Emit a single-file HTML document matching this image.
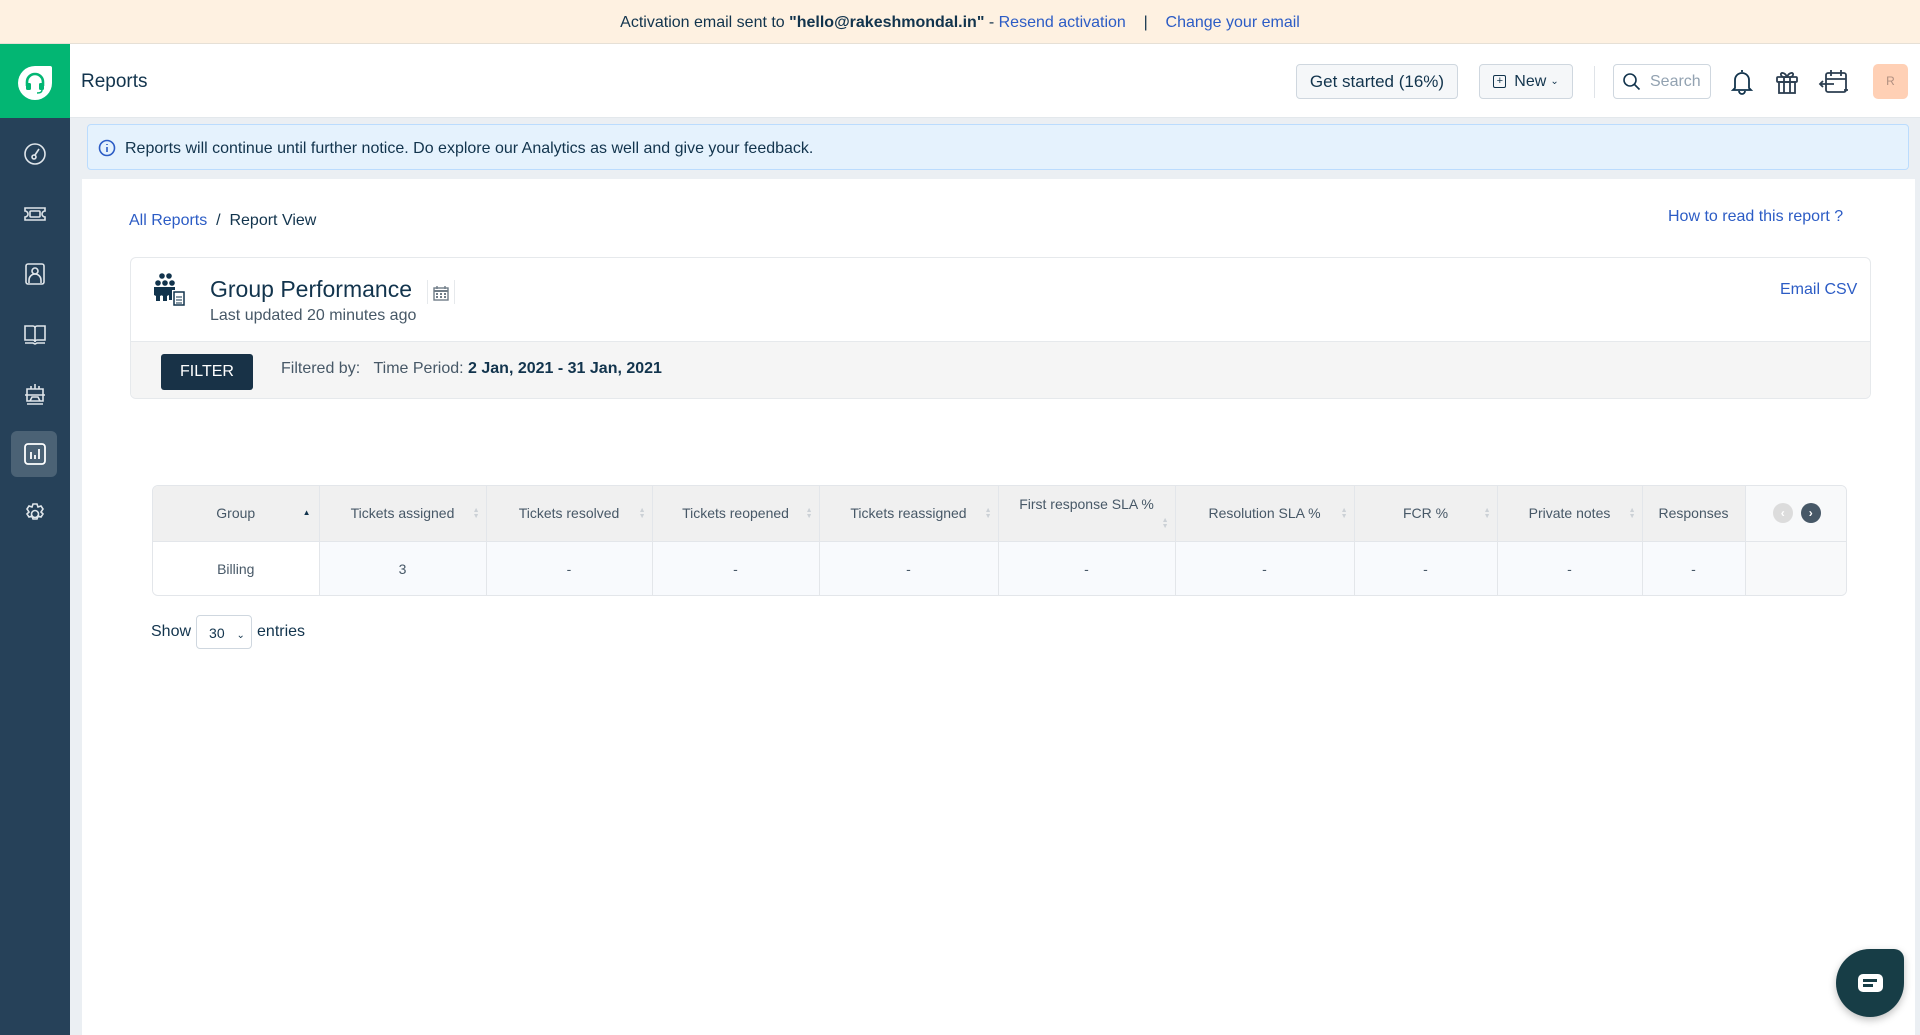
<!DOCTYPE html>
<html><head><meta charset="utf-8">
<style>
*{box-sizing:border-box;margin:0;padding:0}
body{width:1920px;height:1035px;overflow:hidden;font-family:"Liberation Sans",sans-serif;background:#ebeff3;position:relative;color:#12344d}
.abs{position:absolute}
.topb{left:0;top:0;width:1920px;height:44px;background:#fef1e1;border-bottom:1px solid #e6e0d6;font-size:16px;color:#12344d;text-align:center;line-height:46px}
.topb a{color:#2c5cc5;text-decoration:none}
.side{left:0;top:44px;width:70px;height:991px;background:#264159}
.logo{left:0;top:44px;width:70px;height:74px;background:#03b673}
.hdr{left:70px;top:44px;width:1850px;height:74px;background:#fff;border-bottom:1px solid #e3e8ec}
.btn{border:1px solid #cfd7df;border-radius:4px;background:#f5f7f9;font-size:16px;color:#12344d;display:flex;align-items:center;justify-content:center}
.info{left:87px;top:124px;width:1822px;height:46px;background:#e5f2fd;border:1px solid #bbdcfe;border-radius:4px;font-size:16px;line-height:48px;padding-left:37px;color:#12344d}
.card{left:82px;top:179px;width:1833px;height:856px;background:#fff}
.link{color:#2c5cc5}
.rep{left:130px;top:257px;width:1741px;height:142px;border:1px solid #e6e9ec;border-radius:6px;background:#fff;overflow:hidden}
table{border-collapse:collapse;font-size:14px;color:#475867}
td,th{border-right:1px solid #e3e6ea;text-align:center;font-weight:normal}
th{background:#f0f0f0;height:55px;border-bottom:1px solid #e3e6ea}
td{background:#f8fafd;height:55px}
.sort{position:absolute;right:6px;top:22px;font-size:7px;line-height:6px;color:#ccd1d6}
.ico{position:absolute;left:22px;width:26px;height:26px}
</style></head><body>
<div class="abs topb">Activation email sent to <b style="font-weight:bold">"hello@rakeshmondal.in"</b> - <a>Resend activation</a> &nbsp;&nbsp; | &nbsp;&nbsp; <a>Change your email</a></div>
<div class="abs side">
<svg class="ico" style="top:97px" viewBox="0 0 26 26" fill="none" stroke="#dfe5ea" stroke-width="1.6"><circle cx="13" cy="13" r="10"/><path d="M17 8l-4 6"/><circle cx="12" cy="16" r="2"/></svg>
<svg class="ico" style="top:157px" viewBox="0 0 26 26" fill="none" stroke="#dfe5ea" stroke-width="1.6"><path d="M3 7h20v3a3 3 0 000 6v3H3v-3a3 3 0 000-6z"/><rect x="8" y="10" width="10" height="6" rx="1"/></svg>
<svg class="ico" style="top:217px" viewBox="0 0 26 26" fill="none" stroke="#dfe5ea" stroke-width="1.6"><rect x="4" y="3" width="18" height="20" rx="2"/><circle cx="13" cy="10" r="3"/><path d="M7 22v-3a6 6 0 0112 0v3"/></svg>
<svg class="ico" style="top:277px" viewBox="0 0 26 26" fill="none" stroke="#dfe5ea" stroke-width="1.6"><path d="M3 5h8a2 2 0 012 2v14a2 2 0 00-2-2H3zM23 5h-8a2 2 0 00-2 2v14a2 2 0 012-2h8z"/><path d="M3 22h8l2 1 2-1h8"/></svg>
<svg class="ico" style="top:337px" viewBox="0 0 26 26" fill="none" stroke="#dfe5ea" stroke-width="1.6"><path d="M5 8h16v12H5zM13 3v5M9 8V5M17 8V5M3 14h20M8 20l2-4h6l2 4M5 23h16"/></svg>
<div class="abs" style="left:11px;top:387px;width:46px;height:46px;background:#4b6275;border-radius:6px"></div>
<svg class="ico" style="top:397px" viewBox="0 0 26 26" fill="none" stroke="#fff" stroke-width="1.8"><rect x="3" y="3" width="20" height="20" rx="3"/><path d="M9 18v-7M13 18v-4M17 18V8"/></svg>
<svg class="ico" style="top:457px" viewBox="0 0 26 26" fill="none" stroke="#dfe5ea" stroke-width="1.6"><circle cx="13" cy="13" r="3.5"/><path d="M11 3h4l1 3 3-1 2 3-2 3 2 2-2 3-3-1-1 3h-4l-1-3-3 1-2-3 2-2-2-3 2-3 3 1z"/></svg>
</div>
<div class="abs logo"><svg class="abs" style="left:17px;top:21px" width="36" height="36" viewBox="0 0 36 36"><path d="M18 1h15a2 2 0 012 2v15A17 17 0 1118 1z" fill="#fff"/><path d="M10 21v-4a8 8 0 0116 0v4" fill="none" stroke="#03b673" stroke-width="2.6"/><rect x="9" y="18" width="5" height="7" rx="1.5" fill="#03b673"/><rect x="22" y="18" width="5" height="7" rx="1.5" fill="#03b673"/><path d="M25 25q0 3-5 3" stroke="#03b673" stroke-width="1.5" fill="none"/></svg></div>
<div class="abs hdr">
<div class="abs" style="left:11px;top:27px;font-size:19px;color:#12344d">Reports</div>
<div class="abs btn" style="left:1226px;top:20px;width:162px;height:35px;font-size:17px">Get started (16%)</div>
<div class="abs btn" style="left:1409px;top:20px;width:94px;height:35px;font-size:16px"><span style="display:inline-block;width:13px;height:13px;border:1.5px solid #12344d;border-radius:2px;font-size:11px;line-height:10px;text-align:center;margin-right:8px">+</span>New <span style="font-size:10px;margin-left:4px">&#8964;</span></div>
<div class="abs" style="left:1524px;top:22px;width:1px;height:32px;background:#dfe3e8"></div>
<div class="abs btn" style="left:1543px;top:20px;width:98px;height:35px;background:#fff;color:#92a2b1;justify-content:flex-start;padding-left:8px"><svg width="20" height="20" viewBox="0 0 20 20" fill="none" stroke="#12344d" stroke-width="1.6" style="margin-right:8px"><circle cx="8" cy="8" r="6"/><path d="M12.5 12.5l5 5"/></svg>Search</div>
<svg class="abs" style="left:1659px;top:24px" width="26" height="28" viewBox="0 0 26 28" fill="none" stroke="#12344d" stroke-width="1.8"><path d="M13 2v2M6 20V12a7 7 0 0114 0v8l2 2H4z"/><path d="M10 23a3 3 0 006 0"/></svg>
<svg class="abs" style="left:1704px;top:24px" width="26" height="28" viewBox="0 0 26 28" fill="none" stroke="#2c3e50" stroke-width="1.8"><rect x="3" y="9" width="20" height="5" rx="1"/><rect x="5" y="14" width="16" height="11"/><path d="M10 9v16M16 9v16M13 9c-2-5-7-5-6-2s4 2 6 2zM13 9c2-5 7-5 6-2s-4 2-6 2z"/></svg>
<svg class="abs" style="left:1748px;top:24px" width="32" height="28" viewBox="0 0 32 28" fill="none" stroke="#2c3e50" stroke-width="1.8"><rect x="8" y="5" width="20" height="19" rx="2"/><path d="M8 11h20M13 2v6M23 2v6M2 16h14M5 13l-3 3 3 3M26 22h4"/></svg>
<div class="abs" style="left:1803px;top:20px;width:35px;height:35px;background:#ffd0b5;border-radius:5px;color:#b18f80;font-size:12px;text-align:center;line-height:35px">R</div>
</div>
<div class="abs info"><svg class="abs" style="left:10px;top:14px" width="18" height="18" viewBox="0 0 18 18" fill="none" stroke="#2c5cc5" stroke-width="1.6"><circle cx="9" cy="9" r="7.5"/><path d="M9 8v5M9 5v1"/></svg>Reports will continue until further notice. Do explore our Analytics as well and give your feedback.</div>
<div class="abs card">
<div class="abs" style="left:47px;top:33px;font-size:16px;color:#12344d"><span class="link">All Reports</span> &nbsp;/&nbsp; Report View</div>
<div class="abs link" style="left:1586px;top:29px;font-size:16px">How to read this report ?</div>
</div>
<div class="abs rep">
<svg class="abs" style="left:21px;top:14px" width="38" height="38" viewBox="0 0 38 38" fill="#12344d"><circle cx="10" cy="4" r="2.8"/><circle cx="17" cy="4" r="2.8"/><circle cx="6" cy="11" r="2.8"/><circle cx="13" cy="11" r="2.8"/><circle cx="20" cy="11" r="2.8"/><path d="M2 15h8v8l-2 1v5H4v-5l-2-1zM9 15h8v8l-2 1v5h-4v-5l-2-1z"/><path d="M17 15h6v3h-3v10h-3z"/><rect x="22" y="20" width="10" height="13" fill="#fff" stroke="#12344d" stroke-width="1.5"/><path d="M24 25h6M24 28h6M24 31h6" stroke="#12344d" stroke-width="1"/></svg>
<div class="abs" style="left:79px;top:18px;font-size:23px;color:#12344d">Group Performance</div>
<div class="abs" style="left:296px;top:22px;width:1px;height:24px;background:#e6e9ec"></div>
<div class="abs" style="left:323px;top:22px;width:1px;height:24px;background:#e6e9ec"></div>
<svg class="abs" style="left:302px;top:27px" width="16" height="16" viewBox="0 0 16 16"><rect x="1" y="3" width="14" height="12" fill="none" stroke="#6f7c87" stroke-width="1.4"/><path d="M1 6h14" stroke="#6f7c87" stroke-width="2"/><g fill="#6f7c87"><rect x="3" y="8" width="2" height="2"/><rect x="7" y="8" width="2" height="2"/><rect x="11" y="8" width="2" height="2"/><rect x="3" y="11" width="2" height="2"/><rect x="7" y="11" width="2" height="2"/><rect x="11" y="11" width="2" height="2"/></g><path d="M4 1v3M12 1v3" stroke="#6f7c87" stroke-width="1.4"/></svg>
<div class="abs" style="left:79px;top:49px;font-size:16px;color:#475867">Last updated 20 minutes ago</div>
<div class="abs link" style="left:1649px;top:23px;font-size:16px">Email CSV</div>
<div class="abs" style="left:0;top:83px;width:1741px;height:59px;background:#f5f5f5;border-top:1px solid #e6e9ec"></div>
<div class="abs" style="left:30px;top:96px;width:92px;height:36px;background:#183247;border-radius:3px;color:#fff;font-size:16px;text-align:center;line-height:36px">FILTER</div>
<div class="abs" style="left:150px;top:102px;font-size:16px;color:#475867">Filtered by: &nbsp;&nbsp;Time Period: <b style="color:#12344d">2 Jan, 2021 - 31 Jan, 2021</b></div>
</div>
<div class="abs" style="left:152px;top:485px;width:1695px;height:111px;border:1px solid #e3e6ea;border-radius:6px;overflow:hidden">
<table style="width:1695px;table-layout:fixed">
<colgroup><col style="width:166px"><col style="width:167px"><col style="width:166px"><col style="width:167px"><col style="width:179px"><col style="width:177px"><col style="width:179px"><col style="width:143px"><col style="width:145px"><col style="width:103px"><col style="width:103px"></colgroup>
<tr>
<th style="position:relative">Group<span class="sort" style="color:#12344d;font-size:8px;right:8px;top:24px">&#9650;</span></th>
<th style="position:relative">Tickets assigned<span class="sort">&#9650;<br>&#9660;</span></th>
<th style="position:relative">Tickets resolved<span class="sort">&#9650;<br>&#9660;</span></th>
<th style="position:relative">Tickets reopened<span class="sort">&#9650;<br>&#9660;</span></th>
<th style="position:relative">Tickets reassigned<span class="sort">&#9650;<br>&#9660;</span></th>
<th style="position:relative;vertical-align:top;padding-top:10px">First response SLA %<span class="sort" style="top:32px">&#9650;<br>&#9660;</span></th>
<th style="position:relative">Resolution SLA %<span class="sort">&#9650;<br>&#9660;</span></th>
<th style="position:relative">FCR %<span class="sort">&#9650;<br>&#9660;</span></th>
<th style="position:relative">Private notes<span class="sort">&#9650;<br>&#9660;</span></th>
<th>Responses</th>
<th style="background:#f8f9fa;border-right:none"><span style="display:inline-block;width:20px;height:20px;border-radius:50%;background:#dcdcdc;color:#fff;font-size:12px;line-height:20px;font-weight:bold">&#8249;</span> <span style="display:inline-block;width:20px;height:20px;border-radius:50%;background:#475867;color:#fff;font-size:12px;line-height:20px;font-weight:bold;margin-left:4px">&#8250;</span></th>
</tr>
<tr><td style="background:#fff">Billing</td><td>3</td><td>-</td><td>-</td><td>-</td><td>-</td><td>-</td><td>-</td><td>-</td><td>-</td><td style="background:#f8f9fa;border-right:none"></td></tr>
</table></div>
<div class="abs" style="left:151px;top:615px;font-size:16px;color:#12344d;display:flex;align-items:center">Show <span style="display:inline-block;width:56px;height:34px;border:1px solid #cfd7df;border-radius:4px;margin:0 5px;font-size:14px;line-height:34px;padding-left:12px">30 <span style="font-size:10px;margin-left:8px">&#8964;</span></span> entries</div>
<div class="abs" style="left:1836px;top:949px;width:68px;height:68px;background:#173d46;border-radius:50% 10px 50% 50%;box-shadow:0 3px 8px rgba(0,0,0,.25)"><div class="abs" style="left:22px;top:25px;width:25px;height:18px;background:#fff;border-radius:5px"></div><div class="abs" style="left:27px;top:30px;width:14px;height:2.5px;background:#173d46"></div><div class="abs" style="left:27px;top:35px;width:10px;height:2.5px;background:#173d46"></div></div>
</body></html>
